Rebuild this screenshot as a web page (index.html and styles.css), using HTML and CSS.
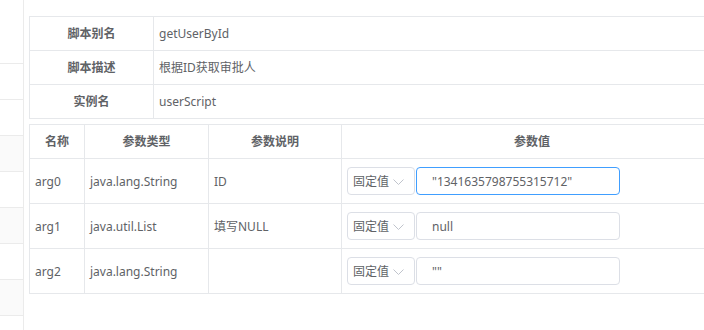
FILE: index.html
```html
<!DOCTYPE html>
<html lang="zh-CN">
<head>
  <meta charset="UTF-8">
  <meta name="viewport" content="width=device-width, initial-scale=1.0">
  <title>脚本参数</title>
  <link rel="stylesheet" href="styles.css">
</head>
<body>
  <div class="page">
    <div class="side-list">
      <div class="side-row"></div>
      <div class="side-row"></div>
      <div class="side-row striped"></div>
      <div class="side-row"></div>
      <div class="side-row striped"></div>
      <div class="side-row"></div>
      <div class="side-row striped"></div>
      <div class="side-row"></div>
    </div>

    <div class="main">
      <table class="info-table">
        <tr>
          <th class="label-cell">脚本别名</th>
          <td>getUserById</td>
        </tr>
        <tr>
          <th class="label-cell">脚本描述</th>
          <td>根据ID获取审批人</td>
        </tr>
        <tr>
          <th class="label-cell">实例名</th>
          <td>userScript</td>
        </tr>
      </table>

      <table class="param-table">
        <thead>
          <tr>
            <th class="col-name">名称</th>
            <th class="col-type">参数类型</th>
            <th class="col-desc">参数说明</th>
            <th class="col-value">参数值</th>
          </tr>
        </thead>
        <tbody>
          <tr>
            <td>arg0</td>
            <td>java.lang.String</td>
            <td>ID</td>
            <td>
              <div class="value-group">
                <div class="mode-select">
                  <span>固定值</span>
                  <svg class="arrow" width="11" height="6" viewBox="0 0 11 6"><polyline points="0.5,0.5 5.5,5.5 10.5,0.5" fill="none" stroke="#c0c4cc" stroke-width="1"/></svg>
                </div>
                <div class="value-input focused">"1341635798755315712"</div>
              </div>
            </td>
          </tr>
          <tr>
            <td>arg1</td>
            <td>java.util.List</td>
            <td>填写NULL</td>
            <td>
              <div class="value-group">
                <div class="mode-select">
                  <span>固定值</span>
                  <svg class="arrow" width="11" height="6" viewBox="0 0 11 6"><polyline points="0.5,0.5 5.5,5.5 10.5,0.5" fill="none" stroke="#c0c4cc" stroke-width="1"/></svg>
                </div>
                <div class="value-input">null</div>
              </div>
            </td>
          </tr>
          <tr>
            <td>arg2</td>
            <td>java.lang.String</td>
            <td></td>
            <td>
              <div class="value-group">
                <div class="mode-select">
                  <span>固定值</span>
                  <svg class="arrow" width="11" height="6" viewBox="0 0 11 6"><polyline points="0.5,0.5 5.5,5.5 10.5,0.5" fill="none" stroke="#c0c4cc" stroke-width="1"/></svg>
                </div>
                <div class="value-input">""</div>
              </div>
            </td>
          </tr>
        </tbody>
      </table>
    </div>
  </div>
</body>
</html>
```

FILE: styles.css
```css
body {
  margin: 0;
  font-family: "Noto Sans", "Noto Sans CJK SC", sans-serif;
  font-size: 12px;
  color: #606266;
  background-color: #fff;
  overflow: hidden;
}

.page {
  display: flex;
  width: 704px;
  height: 330px;
  overflow: hidden;
}

.side-list {
  width: 24px;
  height: 330px;
  box-sizing: border-box;
  flex-shrink: 0;
  padding-top: 63px;
  border-right: 1px solid #ebebeb;
  overflow: hidden;
}

.side-row {
  height: 35px;
  border-top: 1px solid #ebebeb;
}

.side-row.striped {
  background-color: #fafafa;
}

.main {
  width: 694px;
  flex-shrink: 0;
  margin-left: 5px;
  padding-top: 16px;
}

table {
  width: 100%;
  border-collapse: collapse;
  table-layout: fixed;
}

th,
td {
  border: 1px solid #e6e8eb;
  padding: 8px 5px;
  line-height: 17px;
  text-align: left;
  font-weight: normal;
}

.info-table {
  margin-bottom: 5px;
}

.info-table .label-cell {
  width: 113px;
  text-align: center;
  font-weight: bold;
}

.param-table th {
  text-align: center;
  font-weight: bold;
}

.param-table .col-name {
  width: 44px;
}

.param-table .col-type {
  width: 113px;
}

.param-table .col-desc {
  width: 122px;
}

.param-table td {
  vertical-align: middle;
}

.value-group {
  display: flex;
  gap: 1px;
}

.mode-select {
  width: 68px;
  height: 28px;
  box-sizing: border-box;
  border: 1px solid #dcdfe6;
  border-radius: 4px;
  padding-left: 5px;
  display: flex;
  align-items: center;
  gap: 4px;
}

.mode-select .arrow {
  margin-top: 1px;
}

.value-input {
  width: 204px;
  height: 28px;
  box-sizing: border-box;
  border: 1px solid #dcdfe6;
  border-radius: 4px;
  padding-left: 15px;
  display: flex;
  align-items: center;
}

.value-input.focused {
  border-color: #409eff;
}
```
